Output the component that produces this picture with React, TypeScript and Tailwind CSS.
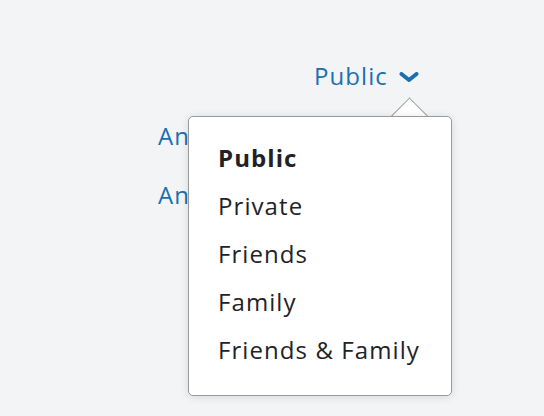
import { useState } from "react";

const OPTIONS = ["Public", "Private", "Friends", "Family", "Friends & Family"];

export default function App() {
  const [selected, setSelected] = useState("Public");

  return (
    <div
      className="h-screen w-full overflow-hidden bg-[#f3f4f6] text-[24px] leading-none tracking-[0.045em]"
      style={{ fontFamily: '"Open Sans", "Liberation Sans", sans-serif' }}
    >
      <div className="flex flex-col pl-[158px] pt-[64px]">
        {/* Trigger */}
        <div className="relative ml-[156px] w-max">
          <button className="flex items-center gap-[11px] text-[#1b6fb1]">
            <span>{selected}</span>
            <svg width="20" height="10" viewBox="0 0 20 10" className="mt-[2px]">
              <path
                d="M2.5 2 L10 8 L17.5 2"
                fill="none"
                stroke="#1b6fb1"
                strokeWidth="4"
                strokeLinecap="round"
                strokeLinejoin="round"
              />
            </svg>
          </button>

          {/* Dropdown */}
          <div className="absolute left-[-126px] top-[52px] z-10 w-[264px]">
            <div className="absolute right-[29px] top-[-19px] h-[27px] w-[27px] translate-y-[6px] rotate-45 border-l border-t border-[#9a9a9a] bg-white" />
            <ul className="relative rounded-[5px] border border-[#9a9a9a] bg-white pb-[21px] pt-[17px] shadow-[0_1px_8px_rgba(0,0,0,0.12)]">
              {OPTIONS.map((o) => (
                <li key={o}>
                  <button
                    onClick={() => setSelected(o)}
                    className={`flex h-[48px] w-full items-center pl-[29px] text-left text-[#222226] ${
                      o === selected ? "font-bold" : ""
                    }`}
                  >
                    {o}
                  </button>
                </li>
              ))}
            </ul>
          </div>
        </div>

        {/* Underlying content */}
        <div className="mt-[36px] flex flex-col gap-[35px] text-[#1b6fb1]">
          <span>Anyone</span>
          <span>Anyone</span>
        </div>
      </div>
    </div>
  );
}
